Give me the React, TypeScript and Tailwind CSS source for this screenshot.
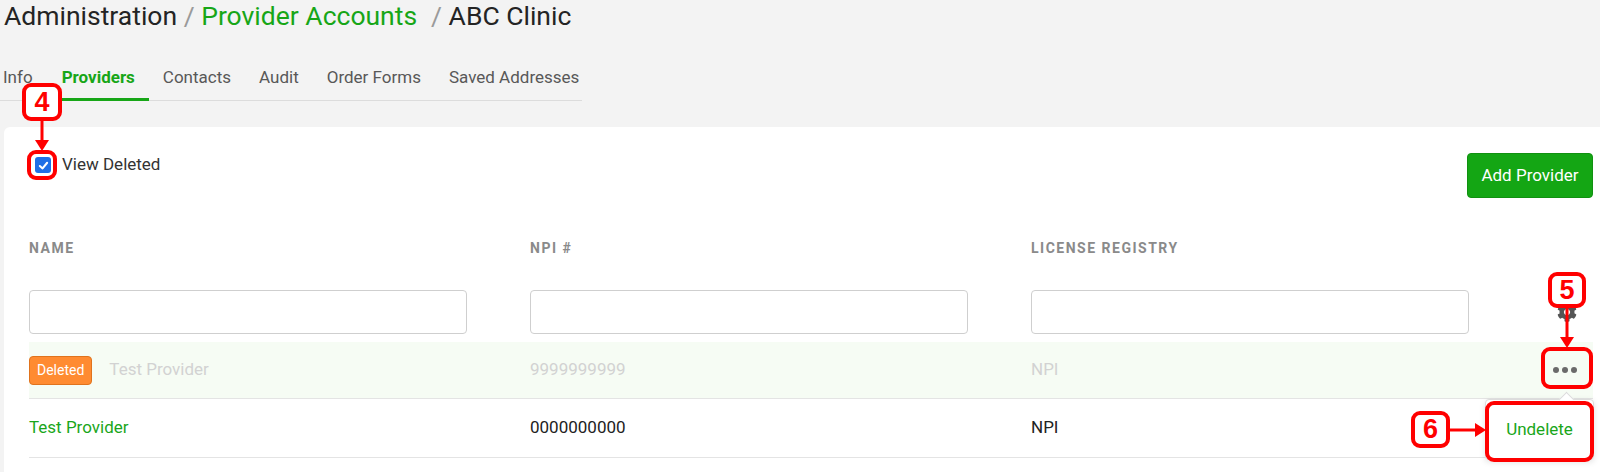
import { FaCog } from 'react-icons/fa'

const tabs = ['Info', 'Providers', 'Contacts', 'Audit', 'Order Forms', 'Saved Addresses']

// red numbered callouts drawn over the screenshot
function Badge({ n, className }: { n: string; className: string }) {
  return (
    <div
      className={`absolute flex items-center justify-center rounded-[9px] border-[4px] border-[#ff0000] bg-white text-[27px] font-bold leading-none text-[#ff0000] ${className}`}
      style={{ fontFamily: '"Liberation Sans", Arial, sans-serif' }}
    >
      {n}
    </div>
  )
}

function Ring({ className }: { className: string }) {
  return <div className={`absolute rounded-[9px] border-[4px] border-[#ff0000] ${className}`} />
}

function ArrowDown({ className }: { className: string }) {
  return (
    <svg className={`absolute ${className}`} width="14" height="30" viewBox="0 0 14 30">
      <line x1="7" y1="0" x2="7" y2="20" stroke="#ff0000" strokeWidth="3" />
      <polygon points="0,19 14,19 7,30" fill="#ff0000" />
    </svg>
  )
}

function ArrowDownLong({ className }: { className: string }) {
  return (
    <svg className={`absolute ${className}`} width="14" height="42" viewBox="0 0 14 42">
      <line x1="7" y1="0" x2="7" y2="32" stroke="#ff0000" strokeWidth="3" />
      <polygon points="0,31 14,31 7,42" fill="#ff0000" />
    </svg>
  )
}

function ArrowRight({ className }: { className: string }) {
  return (
    <svg className={`absolute ${className}`} width="36" height="14" viewBox="0 0 36 14">
      <line x1="0" y1="7" x2="26" y2="7" stroke="#ff0000" strokeWidth="3" />
      <polygon points="25,0 25,14 36,7" fill="#ff0000" />
    </svg>
  )
}

function Dots() {
  return (
    <div className="flex h-[30px] w-[36px] items-center justify-center gap-[3px]">
      <span className="h-[6px] w-[6px] rounded-full bg-[#6a6a6a]" />
      <span className="h-[6px] w-[6px] rounded-full bg-[#6a6a6a]" />
      <span className="h-[6px] w-[6px] rounded-full bg-[#6a6a6a]" />
    </div>
  )
}

export default function App() {
  return (
    <div
      className="relative flex h-[472px] w-[1600px] flex-col overflow-hidden bg-[#f3f3f3]"
      style={{ fontFamily: 'Roboto, "Liberation Sans", sans-serif' }}
    >
      <h1 className="whitespace-nowrap pl-[4px] text-[26.5px] leading-[32px] text-[#242424]">
        Administration <span className="text-[#9a9a9a]">/</span>{' '}
        <span className="text-[#17a617]">Provider Accounts</span>
        <span className="ml-[14px] text-[#9a9a9a]">/</span> ABC Clinic
      </h1>

      <div className="mt-[33px] flex w-[582px] border-b border-[#dcdcdc] text-[17px] leading-[24px]">
        {tabs.map((t, i) => {
          const active = t === 'Providers'
          return (
            <div
              key={t}
              className={`-mb-px shrink-0 whitespace-nowrap border-b-[3px] pb-[9px] ${i === 0 ? 'pl-[3px] pr-[15px]' : 'px-[14px]'} ${
                active ? 'border-[#17a617] font-bold text-[#17a617]' : 'border-transparent text-[#585858]'
              }`}
            >
              {t}
            </div>
          )
        })}
      </div>

      <div className="ml-[4px] mt-[26px] flex-1 rounded-tl-[6px] bg-white pl-[25px] pr-[7px] pt-[26px]">
        <div className="flex items-start justify-between">
          <label className="ml-[6px] flex h-[24px] items-center gap-[11px] text-[17px] text-[#333]">
            <span className="flex h-[16px] w-[16px] items-center justify-center rounded-[3px] bg-[#1f6fe6]">
              <svg width="11" height="11" viewBox="0 0 12 12">
                <path d="M2 6.5 L5 9.2 L10 3" fill="none" stroke="white" strokeWidth="2.2" strokeLinecap="round" strokeLinejoin="round" />
              </svg>
            </span>
            View Deleted
          </label>
          <button className="h-[45px] w-[126px] rounded-[4px] border border-[#119111] bg-[#14a614] text-[17px] text-white">
            Add Provider
          </button>
        </div>

        <div className="mt-[40px] grid grid-cols-[501px_501px_501px_1fr] text-[14px] font-bold leading-[20px] tracking-[1.5px] text-[#8a8a8a]">
          <div>NAME</div>
          <div>NPI #</div>
          <div>LICENSE REGISTRY</div>
          <div />
        </div>

        <div className="mt-[32px] grid grid-cols-[501px_501px_501px_1fr] items-center">
          <input className="h-[44px] w-[438px] rounded-[4px] border border-[#cfcfcf] bg-white" />
          <input className="h-[44px] w-[438px] rounded-[4px] border border-[#cfcfcf] bg-white" />
          <input className="h-[44px] w-[438px] rounded-[4px] border border-[#cfcfcf] bg-white" />
          <div className="flex justify-end pr-[16px]">
            <FaCog className="h-[20px] w-[20px] text-[#555]" />
          </div>
        </div>

        <div className="mt-[8px] grid h-[57px] grid-cols-[501px_501px_501px_1fr] items-center border-b border-[#e4e4e4] bg-[#f6fcf4] text-[17px] text-[#d2d2d2]">
          <div className="flex items-center gap-[17px]">
            <span className="flex h-[29px] items-center rounded-[4px] border border-[#e0731d] bg-[#ff8b31] px-[7px] text-[14px] text-white">
              Deleted
            </span>
            Test Provider
          </div>
          <div>9999999999</div>
          <div>NPI</div>
          <div className="relative flex justify-end pr-[10px]">
            <Dots />
            <div className="absolute right-[-1px] top-[44px] flex h-[61px] w-[109px] items-center justify-center rounded-[4px] border border-[#dcdcdc] bg-white text-[17px] text-[#1aa61a] shadow-[0_2px_6px_rgba(0,0,0,0.12)]">
              <span className="absolute right-[21px] top-[-6px] h-[11px] w-[11px] rotate-45 border-l border-t border-[#dcdcdc] bg-white" />
              Undelete
            </div>
          </div>
        </div>

        <div className="grid h-[59px] grid-cols-[501px_501px_501px_1fr] items-center border-b border-[#e4e4e4] text-[17px] text-[#222]">
          <div className="text-[#1aa61a]">Test Provider</div>
          <div>0000000000</div>
          <div>NPI</div>
          <div />
        </div>
      </div>

      {/* callouts */}
      <Badge n="4" className="left-[22px] top-[83px] h-[38px] w-[40px]" />
      <ArrowDown className="left-[35px] top-[121px]" />
      <Ring className="left-[27px] top-[150px] h-[30px] w-[30px]" />

      <Badge n="5" className="left-[1548px] top-[272px] h-[36px] w-[38px]" />
      <ArrowDownLong className="left-[1560px] top-[306px]" />
      <Ring className="left-[1541px] top-[347px] h-[42px] w-[52px]" />

      <Badge n="6" className="left-[1411px] top-[411px] h-[37px] w-[39px]" />
      <ArrowRight className="left-[1450px] top-[423px]" />
      <Ring className="left-[1485px] top-[401px] h-[61px] w-[109px]" />
    </div>
  )
}
